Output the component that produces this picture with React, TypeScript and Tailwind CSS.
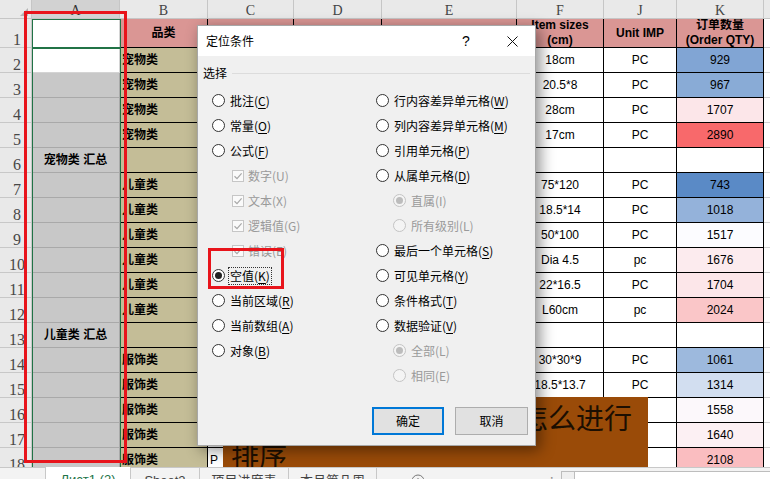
import React from "react";

const cols = {
  hdr: "w-[32px]",
  A: "w-[88px]",
  B: "w-[88px]",
  C: "w-[86px]",
  D: "w-[88px]",
  E: "w-[135px]",
  F: "w-[87px]",
  J: "w-[73px]",
  K: "w-[87px]",
  L: "w-[120px]",
};

const aCol = ["", "", "", "", "宠物类 汇总", "", "", "", "", "", "", "儿童类 汇总", "", "", "", "", ""];
const bCol = ["宠物类", "宠物类", "宠物类", "宠物类", "", "儿童类", "儿童类", "儿童类", "儿童类", "儿童类", "儿童类", "", "服饰类", "服饰类", "服饰类", "服饰类", "服饰类"];
const fCol = ["18cm", "20.5*8", "28cm", "17cm", "", "75*120", "18.5*14", "50*100", "Dia 4.5", "22*16.5", "L60cm", "", "30*30*9", "18.5*13.7", "", "", ""];
const jCol = ["PC", "PC", "PC", "PC", "", "PC", "PC", "PC", "pc", "PC", "pc", "", "PC", "PC", "", "", ""];
const kCol: [string, string][] = [
  ["929", "bg-[#81a5d4]"],
  ["967", "bg-[#89abd6]"],
  ["1707", "bg-[#fce6e9]"],
  ["2890", "bg-[#f8696b]"],
  ["", "bg-white"],
  ["743", "bg-[#5a8ac6]"],
  ["1018", "bg-[#94b2da]"],
  ["1517", "bg-[#fcfcff]"],
  ["1676", "bg-[#fcebee]"],
  ["1704", "bg-[#fce6e9]"],
  ["2024", "bg-[#fac6c8]"],
  ["", "bg-white"],
  ["1061", "bg-[#9db9dd]"],
  ["1314", "bg-[#d2def0]"],
  ["1558", "bg-[#fcf8fb]"],
  ["1640", "bg-[#fcf0f3]"],
  ["2108", "bg-[#fabdc0]"],
];

const cell = "shrink-0 h-full border-r border-b flex items-center overflow-hidden whitespace-nowrap";

function RowNum({ n }: { n: number }) {
  return (
    <div className={`${cols.hdr} ${cell} items-end justify-center pb-[1px] pl-[3px] bg-[#e9e9e9] border-[#c8c8c8] text-[16px] leading-[12px] text-[#474747] font-['Liberation_Serif',serif]`}>
      {n}
    </div>
  );
}

function Radio({ checked, disabled }: { checked?: boolean; disabled?: boolean }) {
  return (
    <span
      className={`flex h-[13px] w-[13px] shrink-0 items-center justify-center rounded-full border ${
        disabled ? "border-[#c4c4c4] bg-[#f4f4f4]" : "border-[#333] bg-white"
      }`}
    >
      {checked && (
        <span className={`h-[7px] w-[7px] rounded-full ${disabled ? "bg-[#bcbcbc]" : "bg-[#222]"}`} />
      )}
    </span>
  );
}

function Check() {
  return (
    <svg width="12" height="12" viewBox="0 0 12 12" className="shrink-0">
      <rect x="0.5" y="0.5" width="11" height="11" fill="#fafafa" stroke="#c6c6c6" />
      <path d="M2.5 6.2 L5 8.6 L9.6 3.4" fill="none" stroke="#a8a8a8" strokeWidth="1.2" />
    </svg>
  );
}

function Label({ t, k, disabled }: { t: string; k: string; disabled?: boolean }) {
  if (disabled) return <span className="text-[#9a9a9a]">{`${t}(${k})`}</span>;
  return (
    <span>
      {t}(<span className="underline underline-offset-2">{k}</span>)
    </span>
  );
}

type Opt =
  | { kind: "radio"; t: string; k: string; checked?: boolean; focus?: boolean }
  | { kind: "check"; t: string; k: string }
  | { kind: "sub"; t: string; k: string; checked?: boolean }
  | { kind: "none" };

const leftOpts: Opt[] = [
  { kind: "radio", t: "批注", k: "C" },
  { kind: "radio", t: "常量", k: "O" },
  { kind: "radio", t: "公式", k: "F" },
  { kind: "check", t: "数字", k: "U" },
  { kind: "check", t: "文本", k: "X" },
  { kind: "check", t: "逻辑值", k: "G" },
  { kind: "check", t: "错误", k: "E" },
  { kind: "radio", t: "空值", k: "K", checked: true, focus: true },
  { kind: "radio", t: "当前区域", k: "R" },
  { kind: "radio", t: "当前数组", k: "A" },
  { kind: "radio", t: "对象", k: "B" },
  { kind: "none" },
];

const rightOpts: Opt[] = [
  { kind: "radio", t: "行内容差异单元格", k: "W" },
  { kind: "radio", t: "列内容差异单元格", k: "M" },
  { kind: "radio", t: "引用单元格", k: "P" },
  { kind: "radio", t: "从属单元格", k: "D" },
  { kind: "sub", t: "直属", k: "I", checked: true },
  { kind: "sub", t: "所有级别", k: "L" },
  { kind: "radio", t: "最后一个单元格", k: "S" },
  { kind: "radio", t: "可见单元格", k: "Y" },
  { kind: "radio", t: "条件格式", k: "T" },
  { kind: "radio", t: "数据验证", k: "V" },
  { kind: "sub", t: "全部", k: "L", checked: true },
  { kind: "sub", t: "相同", k: "E" },
];

function Option({ o }: { o: Opt }) {
  if (o.kind === "none") return <div className="h-[25px]" />;
  if (o.kind === "check")
    return (
      <div className="flex h-[25px] items-center pl-[20px]">
        <Check />
        <span className="ml-[4px]">
          <Label t={o.t} k={o.k} disabled />
        </span>
      </div>
    );
  if (o.kind === "sub")
    return (
      <div className="flex h-[25px] items-center pl-[17px]">
        <Radio checked={o.checked} disabled />
        <span className="ml-[5px]">
          <Label t={o.t} k={o.k} disabled />
        </span>
      </div>
    );
  return (
    <div className="flex h-[25px] items-center">
      <Radio checked={o.checked} />
      {o.focus ? (
        <span className="ml-[3px] border border-dotted border-[#333] px-[1px] leading-[16px]">
          <Label t={o.t} k={o.k} />
        </span>
      ) : (
        <span className="ml-[5px]">
          <Label t={o.t} k={o.k} />
        </span>
      )}
    </div>
  );
}

function Dialog() {
  return (
    <div className="absolute left-[197px] top-[25px] z-30 flex h-[421px] w-[339px] flex-col border border-[#a7a7a7] bg-[#f0f0f0] text-[12px] text-black shadow-[4px_4px_14px_rgba(0,0,0,0.45)] font-['Noto_Sans_CJK_SC',sans-serif]">
      <div className="flex h-[30px] shrink-0 items-center bg-white">
        <span className="flex-1 pl-[8px]">定位条件</span>
        <span className="flex h-full w-[46px] items-center justify-center text-[14px] font-['Liberation_Sans',sans-serif]">?</span>
        <span className="flex h-full w-[46px] items-center justify-center">
          <svg width="11" height="11" viewBox="0 0 11 11">
            <path d="M0.5 0.5 L10.5 10.5 M10.5 0.5 L0.5 10.5" stroke="#111" strokeWidth="1" />
          </svg>
        </span>
      </div>
      <div className="flex flex-1 flex-col">
        <div className="mt-[7px] flex h-[20px] items-center pl-[5px] pr-[5px]">
          <span>选择</span>
          <span className="ml-[5px] h-px flex-1 bg-[#dcdcdc]" />
        </div>
        <div className="mt-[5px] grid grid-cols-[164px_1fr] pl-[14px]">
          <div className="flex flex-col">
            {leftOpts.map((o, i) => (
              <Option key={i} o={o} />
            ))}
          </div>
          <div className="flex flex-col">
            {rightOpts.map((o, i) => (
              <Option key={i} o={o} />
            ))}
          </div>
        </div>
        <div className="flex-1" />
        <div className="flex justify-end gap-[11px] pb-[10px] pr-[7px]">
          <button className="flex h-[28px] w-[72px] items-center justify-center border-2 border-[#0078d7] bg-[#e1e1e1]">确定</button>
          <button className="flex h-[28px] w-[73px] items-center justify-center border border-[#adadad] bg-[#e1e1e1]">取消</button>
        </div>
      </div>
    </div>
  );
}

function Letter({ w, l, active }: { w: string; l: string; active?: boolean }) {
  return (
    <div
      className={`${w} ${cell} justify-center pt-[4px] border-[#c6c6c6] text-[14px] leading-[14px] font-['Liberation_Serif',serif] ${
        active ? "bg-[#d2d2d2] text-[#333]" : "bg-[#e9e9e9] text-[#444]"
      }`}
    >
      {l}
    </div>
  );
}

export default function App() {
  const pink = "bg-[#da9694] border-black justify-center text-center font-bold leading-[15px]";
  return (
    <div className="relative h-[479px] w-[770px] overflow-hidden bg-white text-[12px] text-black font-['Liberation_Sans','Noto_Sans_CJK_SC',sans-serif]">
      <div className="relative h-[467px] overflow-hidden">
        {/* column letters */}
        <div className="flex h-[19px]">
          <div className={`${cols.hdr} ${cell} relative bg-[#e9e9e9] border-[#c6c6c6]`}>
            <svg width="8" height="8" viewBox="0 0 8 8" className="absolute bottom-[2px] right-[3px]">
              <path d="M8 0 L8 8 L0 8 Z" fill="#b4b4b4" />
            </svg>
          </div>
          <Letter w={cols.A} l="A" active />
          <Letter w={cols.B} l="B" />
          <Letter w={cols.C} l="C" />
          <Letter w={cols.D} l="D" />
          <Letter w={cols.E} l="E" />
          <Letter w={cols.F} l="F" />
          <Letter w={cols.J} l="J" />
          <Letter w={cols.K} l="K" />
          <Letter w={cols.L} l="L" />
        </div>

        {/* header row */}
        <div className="flex h-[29px]">
          <RowNum n={1} />
          <div className={`${cols.A} ${cell} bg-white border-[#d4d4d4]`} />
          <div className={`${cols.B} ${cell} ${pink}`}>品类</div>
          <div className={`${cols.C} ${cell} ${pink}`} />
          <div className={`${cols.D} ${cell} ${pink}`} />
          <div className={`${cols.E} ${cell} ${pink}`} />
          <div className={`${cols.F} ${cell} ${pink} flex-col`}>
            <span>Item sizes</span>
            <span>(cm)</span>
          </div>
          <div className={`${cols.J} ${cell} ${pink}`}>Unit IMP</div>
          <div className={`${cols.K} ${cell} ${pink} flex-col`}>
            <span>订单数量</span>
            <span>(Order QTY)</span>
          </div>
          <div className={`${cols.L} ${cell} bg-white border-[#d4d4d4]`} />
        </div>

        {/* data rows */}
        {bCol.map((b, i) => (
          <div key={i} className="flex h-[25px]">
            <RowNum n={i + 2} />
            <div
              className={`${cols.A} ${cell} justify-center font-bold ${
                i === 0 ? "bg-white border-[#d4d4d4]" : "bg-[#c8c8c8] border-[#a9a9a9]"
              }`}
            >
              {aCol[i]}
            </div>
            <div className={`${cols.B} ${cell} bg-[#c4bd97] border-black pl-[2px] font-bold`}>{b}</div>
            <div className={`${cols.C} ${cell} bg-white border-black pl-[2px]`}>{i === 16 ? "P" : ""}</div>
            <div className={`${cols.D} ${cell} bg-white border-black`} />
            <div className={`${cols.E} ${cell} bg-white border-black`} />
            <div className={`${cols.F} ${cell} bg-white border-black justify-center`}>{fCol[i]}</div>
            <div className={`${cols.J} ${cell} bg-white border-black justify-center`}>{jCol[i]}</div>
            <div className={`${cols.K} ${cell} ${kCol[i][1]} border-black justify-center`}>{kCol[i][0]}</div>
            <div className={`${cols.L} ${cell} bg-white border-[#d4d4d4]`} />
          </div>
        ))}

        {/* selection outline */}
        <div className="absolute left-[32px] top-[19px] h-[460px] w-[89px] border border-[#217346]" />
        <div className="absolute left-[32px] top-[47px] h-[2px] w-[89px] bg-[#217346]" />

        {/* red highlight around column A */}
        <div className="absolute left-[24px] top-[11px] z-20 h-[452px] w-[103px] border-[3px] border-[#e8141b]" />

        {/* brown text box behind dialog */}
        <div className="absolute left-[223px] top-[397px] z-10 flex h-[90px] w-[425px] flex-col bg-[#9a4b08] pt-[1px] text-[28px] leading-[38px] text-[#1c0f02] font-['Noto_Sans_CJK_SC',sans-serif]">
          <div className="pr-[16px] text-right">分类汇总后的数据怎么进行</div>
          <div className="pl-[8px]">排序</div>
        </div>

        <Dialog />

        {/* red highlight around 空值 */}
        <div className="absolute left-[208px] top-[248px] z-40 h-[41px] w-[76px] border-[3px] border-[#e8141b]" />
      </div>

      {/* sheet tabs */}
      <div className="flex h-[26px] border-t border-[#c8c8c8] bg-[#f3f3f3] text-[13px] leading-[17px] text-[#444]">
        <div className="w-[45px]" />
        <div className="-mt-px w-[86px] border-x border-[#c8c8c8] bg-white pt-[4px] text-center text-[#217346]">Лист1 (2)</div>
        <div className="w-[69px] border-r border-[#c8c8c8] pt-[4px] text-center">Sheet2</div>
        <div className="w-[89px] border-r border-[#c8c8c8] pt-[4px] text-center">项目进度表</div>
        <div className="w-[88px] border-r border-[#c8c8c8] pt-[4px] text-center">本月第几周</div>
        <div className="ml-[34px] pt-[6px]">
          <svg width="14" height="14" viewBox="0 0 14 14">
            <circle cx="7" cy="7" r="6" fill="none" stroke="#777" strokeWidth="1" />
            <path d="M7 4 V10 M4 7 H10" stroke="#777" strokeWidth="1" />
          </svg>
        </div>
        <div className="ml-[125px] pt-[5px] text-[#888]">⁝</div>
        <div className="ml-[8px] mt-[3px] flex flex-1">
          <div className="h-full w-[14px] border border-[#bdbdbd] bg-[#f0f0f0]" />
          <div className="h-full flex-1 border-y border-[#bdbdbd] bg-white" />
        </div>
      </div>
    </div>
  );
}
